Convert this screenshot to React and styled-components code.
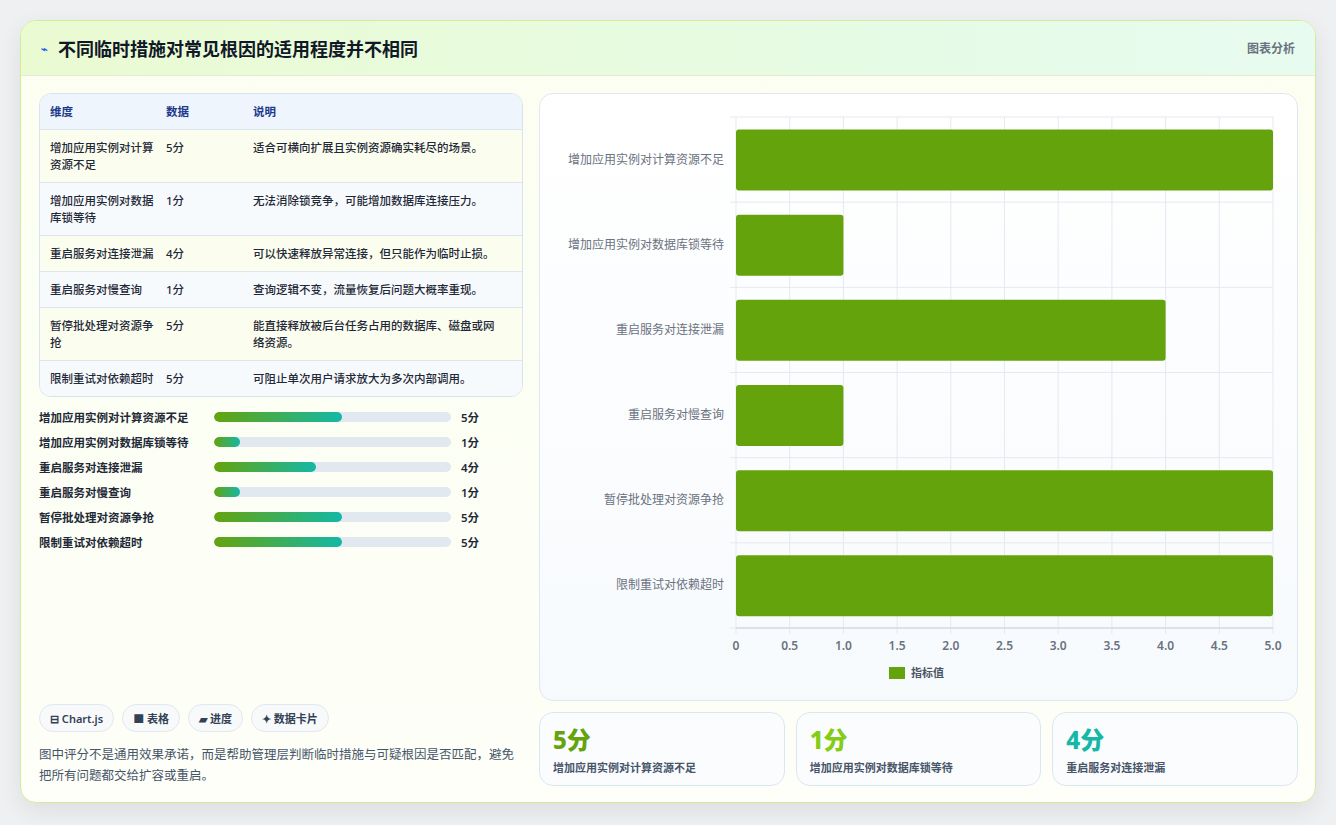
import React from "react";
import styled, { createGlobalStyle } from "styled-components";

const Global = createGlobalStyle`
  html,body{margin:0;padding:0;background:#eef0f2;}
  body{font-family:"Noto Sans","Noto Sans CJK SC",sans-serif;}
  *{box-sizing:border-box;}
`;
const Page = styled.div`padding:20px 20px 22px 20px;height:825px;`;
const Card = styled.div`
  height:783px;border:1px solid #d4ec9a;border-radius:16px;overflow:hidden;
  background:linear-gradient(180deg,#fbfef0,#fdfff8);
  box-shadow:0 8px 24px rgba(0,0,0,.08);display:flex;flex-direction:column;
`;
const Header = styled.div`
  height:55px;flex:none;display:flex;align-items:center;justify-content:space-between;
  padding:0 20px 0 20px;border-bottom:1px solid #e3ecd3;
  background:linear-gradient(90deg,#eafbd2,#e6fbe6 70%,#e8fbf0);
`;
const Title = styled.h1`margin:0;font-size:18px;font-weight:700;color:#111827;display:flex;align-items:center;gap:10px;`;
const Icon = styled.span`font-size:11px;color:#2563eb;`;
const HeadLink = styled.span`font-size:12px;color:#6b7280;font-weight:600;`;
const Body = styled.div`flex:1;display:grid;grid-template-columns:484px 1fr;gap:16px;padding:17px 19px 18px 18px;`;
const Left = styled.div`display:flex;flex-direction:column;`;
const Table = styled.div`border:1px solid #d9e3ef;border-radius:12px;overflow:hidden;`;
const Row = styled.div`
  display:grid;grid-template-columns:116px 87px 1fr;padding:${p=>p.head?"9px 10px":"9px 10px"};
  background:${p=>p.head?"#eef5fd":p.alt?"#f7fafd":"#fbfdef"};
  border-top:${p=>p.head?"none":"1px solid #dde5ee"};
  font-size:11.5px;line-height:17px;font-weight:${p=>p.head?600:500};
  color:${p=>p.head?"#1e3a8a":"#1f2937"};min-height:${p=>p.head?"33px":"35px"};
`;
const Cell = styled.div`padding-right:10px;`;
const Bars = styled.div`display:flex;flex-direction:column;gap:9px;margin-top:12px;`;
const BarRow = styled.div`display:grid;grid-template-columns:175px 237px 1fr;align-items:center;gap:0;height:16px;font-size:11.5px;font-weight:600;color:#1f2937;`;
const Track = styled.div`height:10px;border-radius:5px;background:#e2e8f0;overflow:hidden;`;
const Fill = styled.div`height:100%;border-radius:5px;background:linear-gradient(90deg,#65a30d,#14b8a6);`;
const Val = styled.span`padding-left:10px;`;
const Spacer = styled.div`flex:1;`;
const Chips = styled.div`display:flex;gap:8px;`;
const Chip = styled.span`
  height:28px;padding:0 10px;border:1px solid #e2e8f0;border-radius:14px;background:#f7f9fb;
  font-size:11px;font-weight:600;color:#334155;display:flex;align-items:center;gap:3px;
`;
const Note = styled.p`margin:12px 0 0;font-size:12.5px;line-height:21px;color:#475569;`;
const Right = styled.div`display:flex;flex-direction:column;gap:11px;`;
const ChartBox = styled.div`height:608px;border:1px solid #dfe7f1;border-radius:14px;background:linear-gradient(180deg,#fff,#f7fafd);overflow:hidden;`;
const Stats = styled.div`display:grid;grid-template-columns:repeat(3,1fr);gap:11px;`;
const Stat = styled.div`height:74px;border:1px solid #dbe6f3;border-radius:14px;background:#fafcfe;padding:10px 13px;`;
const Big = styled.div`font-size:24px;font-weight:800;color:${p=>p.c};line-height:34px;`;
const Small = styled.div`font-size:11px;font-weight:600;color:#475569;margin-top:2px;`;

const data=[
  ["增加应用实例对计算资源不足",5,"适合可横向扩展且实例资源确实耗尽的场景。"],
  ["增加应用实例对数据库锁等待",1,"无法消除锁竞争，可能增加数据库连接压力。"],
  ["重启服务对连接泄漏",4,"可以快速释放异常连接，但只能作为临时止损。"],
  ["重启服务对慢查询",1,"查询逻辑不变，流量恢复后问题大概率重现。"],
  ["暂停批处理对资源争抢",5,"能直接释放被后台任务占用的数据库、磁盘或网络资源。"],
  ["限制重试对依赖超时",5,"可阻止单次用户请求放大为多次内部调用。"],
];
const tableName=["增加应用实例对计算资源不足","增加应用实例对数据库锁等待","重启服务对连接泄漏","重启服务对慢查询","暂停批处理对资源争抢","限制重试对依赖超时"];

function Chart(){
  const x0=196,x1=733,y0=23,y1=534,rh=(y1-y0)/6;
  const ticks=[0,0.5,1,1.5,2,2.5,3,3.5,4,4.5,5];
  const sx=v=>x0+(x1-x0)*v/5;
  return (
    <svg width="757" height="608" viewBox="0 0 757 608">
      {ticks.map(t=><line key={t} x1={sx(t)} x2={sx(t)} y1={y0} y2={y1+6} stroke="#e5e9f0"/>)}
      {[0,1,2,3,4,5,6].map(i=><line key={i} x1={x0-6} x2={x1} y1={y0+i*rh} y2={y0+i*rh} stroke="#e5e9f0"/>)}
      <line x1={x0} x2={x1} y1={y1} y2={y1} stroke="#cbd2dc"/>
      {data.map((d,i)=>(
        <g key={i}>
          <rect x={x0} y={y0+i*rh+12.5} width={sx(d[1])-x0} height={61} rx="3" fill="#65a30d"/>
          <text x={x0-12} y={y0+i*rh+rh/2+4} textAnchor="end" fontSize="12" fill="#6b7280" fontFamily="Noto Sans CJK SC,sans-serif">{d[0]}</text>
        </g>
      ))}
      {ticks.map(t=><text key={t} x={sx(t)} y={556} textAnchor="middle" fontSize="12" fontWeight="600" fill="#6b7280" fontFamily="Noto Sans,sans-serif">{t===0?"0":t.toFixed(1)}</text>)}
      <rect x="349" y="573" width="16" height="12" fill="#65a30d"/>
      <text x="371" y="583" fontSize="11" fontWeight="600" fill="#4b5563" fontFamily="Noto Sans CJK SC,sans-serif">指标值</text>
    </svg>
  );
}

export default function App(){
  return (<>
    <Global/>
    <Page><Card>
      <Header>
        <Title><Icon>⌁</Icon>不同临时措施对常见根因的适用程度并不相同</Title>
        <HeadLink>图表分析</HeadLink>
      </Header>
      <Body>
        <Left>
          <Table>
            <Row head><Cell>维度</Cell><Cell>数据</Cell><Cell>说明</Cell></Row>
            {data.map((d,i)=>(
              <Row key={i} alt={i%2===1}><Cell>{tableName[i]}</Cell><Cell>{d[1]}分</Cell><Cell>{d[2]}</Cell></Row>
            ))}
          </Table>
          <Bars>
            {data.map((d,i)=>(
              <BarRow key={i}><span>{d[0]}</span><Track><Fill style={{width:`${d[1]/5*54}%`}}/></Track><Val>{d[1]}分</Val></BarRow>
            ))}
          </Bars>
          <Spacer/>
          <Chips>
            <Chip>⊟ Chart.js</Chip><Chip>■ 表格</Chip><Chip>▰ 进度</Chip><Chip>✦ 数据卡片</Chip>
          </Chips>
          <Note>图中评分不是通用效果承诺，而是帮助管理层判断临时措施与可疑根因是否匹配，避免把所有问题都交给扩容或重启。</Note>
        </Left>
        <Right>
          <ChartBox><Chart/></ChartBox>
          <Stats>
            <Stat><Big c="#65a30d">5分</Big><Small>增加应用实例对计算资源不足</Small></Stat>
            <Stat><Big c="#84cc16">1分</Big><Small>增加应用实例对数据库锁等待</Small></Stat>
            <Stat><Big c="#14b8a6">4分</Big><Small>重启服务对连接泄漏</Small></Stat>
          </Stats>
        </Right>
      </Body>
    </Card></Page>
  </>);
}
